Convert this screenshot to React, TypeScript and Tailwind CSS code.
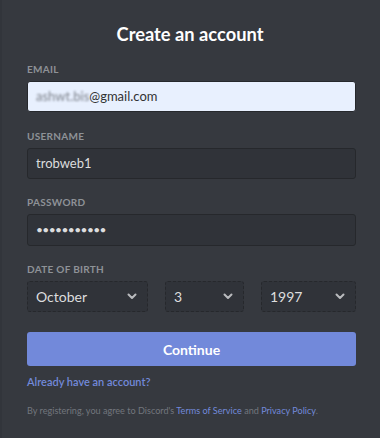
import { FC, ReactNode } from "react";

const Label: FC<{ children: ReactNode }> = ({ children }) => (
    <div className="text-[10px] leading-[12px] font-bold uppercase tracking-[0.3px] text-[#8e9297] mb-[6px]">
        {children}
    </div>
);

const Chevron = () => (
    <svg width="10" height="7" viewBox="0 0 10 7" fill="none" className="shrink-0">
        <path d="M1.5 1.5L5 5L8.5 1.5" stroke="#b9bbbe" strokeWidth="2" strokeLinecap="round" strokeLinejoin="round" />
    </svg>
);

const Select: FC<{ value: string; width: string }> = ({ value, width }) => (
    <div className={`${width} h-[31px] flex items-center justify-between pl-[8px] pr-[10px] bg-[#303339] border border-dashed border-[#26282c] rounded-[3px]`}>
        <span className="text-[14px] text-[#dcddde]">{value}</span>
        <Chevron />
    </div>
);

export default function App() {
    return (
        <div
            className="w-[380px] h-[438px] bg-[#36393f] pl-[25px] pr-[24px] pt-[21px] border-l-2 border-[#32353b] flex flex-col"
            style={{ fontFamily: 'Lato, "Noto Sans", sans-serif' }}
        >
            <h1 className="text-[18.3px] leading-[26px] font-bold text-white text-center mb-[16px] ml-[-3px]">
                Create an account
            </h1>

            <Label>Email</Label>
            <div className="h-[31px] flex items-center px-[8px] bg-[#e8f0fe] border border-[#26282c] rounded-[3px] text-[13px] text-[#333]">
                <span className="blur-[1.3px] text-[#7d828c]">ashwt.bis</span>
                <span>@gmail.com</span>
            </div>

            <div className="mt-[18px]">
                <Label>Username</Label>
            </div>
            <div className="h-[31px] flex items-center px-[8px] bg-[#303339] border border-[#26282c] rounded-[3px] text-[13px] text-[#dcddde]">
                trobweb1
            </div>

            <div className="mt-[17px]">
                <Label>Password</Label>
            </div>
            <div className="h-[32px] flex items-center px-[8px] bg-[#303339] border border-[#26282c] rounded-[3px] text-[12px] tracking-[-0.6px] text-[#dcddde]">
                •••••••••••
            </div>

            <div className="mt-[17px]">
                <Label>Date of birth</Label>
            </div>
            <div className="flex gap-[17px]">
                <Select value="October" width="w-[121px]" />
                <Select value="3" width="w-[79px]" />
                <Select value="1997" width="w-[95px]" />
            </div>

            <button className="mt-[20px] h-[34px] bg-[#7289da] rounded-[3px] text-white text-[14px] font-bold">
                Continue
            </button>

            <a className="mt-[8px] text-[11px] leading-[16px] text-[#7289da] font-semibold">
                Already have an account?
            </a>

            <p className="mt-[14px] text-[9.1px] leading-[14px] text-[#72767d] whitespace-nowrap">
                By registering, you agree to Discord's <span className="text-[#7289da]">Terms of Service</span> and{" "}
                <span className="text-[#7289da]">Privacy Policy</span>.
            </p>
        </div>
    );
}
